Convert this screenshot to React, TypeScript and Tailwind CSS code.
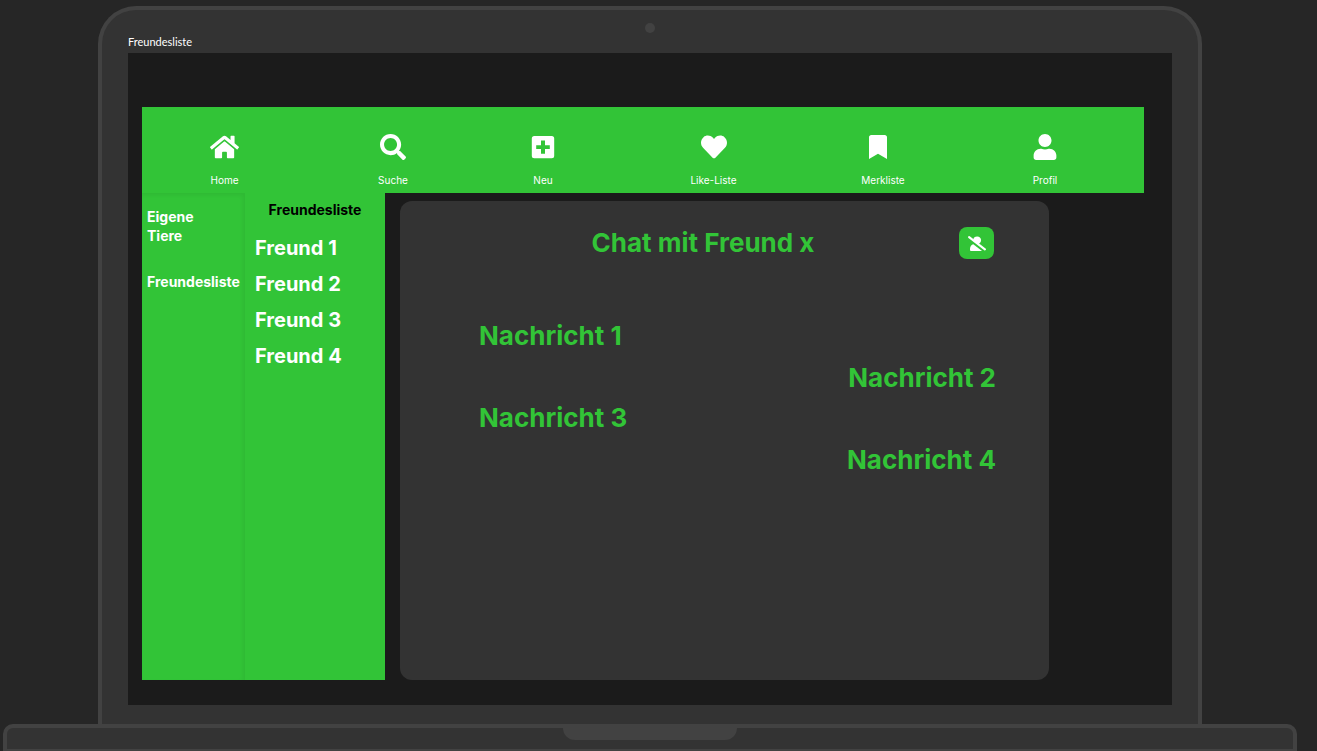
import type { ComponentType, SVGProps } from "react";
import { FaBookmark, FaHeart, FaHome, FaSearch, FaUser } from "react-icons/fa";

type NavItem = {
  label: string;
  icon: ComponentType<SVGProps<SVGSVGElement>>;
  size: string;
};

function PlusSquareIcon(props: SVGProps<SVGSVGElement>) {
  return (
    <svg viewBox="0 0 26 26" fill="currentColor" {...props}>
      <path
        fillRule="evenodd"
        d="M4.3 2h17.4a2.5 2.5 0 0 1 2.5 2.5v17.2a2.5 2.5 0 0 1-2.5 2.5H4.3a2.5 2.5 0 0 1-2.5-2.5V4.5A2.5 2.5 0 0 1 4.3 2ZM11 6.5v4.7H6.2v3.8H11v4.7h4V15h4.8v-3.8H15V6.5Z"
      />
    </svg>
  );
}

function UserSlashIcon(props: SVGProps<SVGSVGElement>) {
  return (
    <svg viewBox="0 0 18 15" fill="currentColor" {...props}>
      <path d="M5.2 3.8A4 4 0 0 1 13.1 4a4 4 0 0 1-1.8 3.5L10.2 8.2Z" />
      <path d="M5.3 8.3 14 15H3a1 1 0 0 1-1-1v-1.200C2 10.500 3.400 8.800 5.300 8.300Z" />
      <path d="M1.100 1.200 16.900 13.400" stroke="currentColor" strokeWidth="2.100" strokeLinecap="round" />
    </svg>
  );
}

const navItems: NavItem[] = [
  { label: "Home", icon: FaHome, size: "h-[26px] w-[29px]" },
  { label: "Suche", icon: FaSearch, size: "size-[26px]" },
  { label: "Neu", icon: PlusSquareIcon, size: "size-[26px]" },
  { label: "Like-Liste", icon: FaHeart, size: "size-[26px]" },
  { label: "Merkliste", icon: FaBookmark, size: "h-6 w-7" },
  { label: "Profil", icon: FaUser, size: "size-[26px]" },
];

const friends = ["Freund 1", "Freund 2", "Freund 3", "Freund 4"];

const exchanges = [
  { received: "Nachricht 1", sent: "Nachricht 2" },
  { received: "Nachricht 3", sent: "Nachricht 4" },
];

function NavBar() {
  return (
    <nav className="grid h-[86px] shrink-0 grid-cols-[165fr_172fr_128fr_213fr_126fr_198fr] bg-[#32c437]">
      {navItems.map(({ label, icon: Icon, size }) => (
        <a
          key={label}
          href="#"
          className="flex flex-col items-center gap-3 pt-[27px] text-[10px] leading-4 text-white"
        >
          <span className="flex h-[26px] items-center">
            <Icon
              className={size}
              preserveAspectRatio={label === "Merkliste" ? "xMinYMid meet" : "xMidYMid meet"}
              aria-hidden
            />
          </span>
          {label}
        </a>
      ))}
    </nav>
  );
}

function Sidebar() {
  return (
    <aside className="flex shrink-0 bg-[#32c437] font-bold text-white">
      <nav className="flex w-[103px] flex-col gap-[27px] pt-[14px] pl-[5px] text-sm leading-[19px] shadow-[inset_-2px_2px_4px_rgba(0,0,0,0.06)]">
        <a href="#" className="w-16">
          Eigene Tiere
        </a>
        <a href="#">Freundesliste</a>
      </nav>
      <section className="w-[140px] pt-[7px]">
        <h2 className="text-center text-sm leading-[19px] text-black">Freundesliste</h2>
        <ul className="pt-[11px] pl-[10px] text-xl leading-9">
          {friends.map((friend) => (
            <li key={friend}>
              <a href="#">{friend}</a>
            </li>
          ))}
        </ul>
      </section>
    </aside>
  );
}

function Chat() {
  return (
    <main className="mt-2 mr-[95px] ml-[15px] flex-1 rounded-xl bg-[#333333] pt-[26px] text-[26px] leading-8 font-bold text-[#32c437]">
      <header className="flex items-center pr-[55px] pl-[47px]">
        <h1 className="flex-1 text-center">Chat mit Freund x</h1>
        <button
          type="button"
          aria-label="Freund entfernen"
          className="flex h-8 w-[35px] items-center justify-center rounded-lg bg-[#32c437] text-white"
        >
          <UserSlashIcon className="h-[15px] w-[18px]" aria-hidden />
        </button>
      </header>
      <div className="flex flex-col gap-2 pt-[61px] pr-[53px] pl-[79px]">
        {exchanges.map(({ received, sent }) => (
          <div key={received} className="flex flex-col gap-[10px]">
            <p className="self-start">{received}</p>
            <p className="self-end">{sent}</p>
          </div>
        ))}
      </div>
    </main>
  );
}

export default function App() {
  return (
    <div className="flex h-screen flex-col overflow-hidden bg-[#262626] pt-[6px] pr-5 pl-[3px] font-['Inter',sans-serif]">
      <div className="relative mx-[95px] flex min-h-0 flex-1 flex-col rounded-t-[38px] border-4 border-b-0 border-[#424242] bg-[#333333] px-[26px] pb-[19px]">
        <span className="absolute top-[13px] left-1/2 size-[10px] -translate-x-1/2 rounded-full bg-[#424242]" />
        <p className="h-[43px] pt-6 font-['Lato',sans-serif] text-[11px] leading-4 text-white">
          Freundesliste
        </p>
        <div className="flex min-h-0 flex-1 flex-col bg-[#1b1b1b] pt-[54px] pr-7 pb-[25px] pl-[14px]">
          <NavBar />
          <div className="flex min-h-0 flex-1">
            <Sidebar />
            <Chat />
          </div>
        </div>
      </div>
      <div className="flex h-[27px] shrink-0 justify-center rounded-t-[10px] border-4 border-b-2 border-[#424242] bg-[#333333]">
        <div className="h-3 w-[174px] rounded-b-[16px] bg-[#424242]" />
      </div>
    </div>
  );
}
